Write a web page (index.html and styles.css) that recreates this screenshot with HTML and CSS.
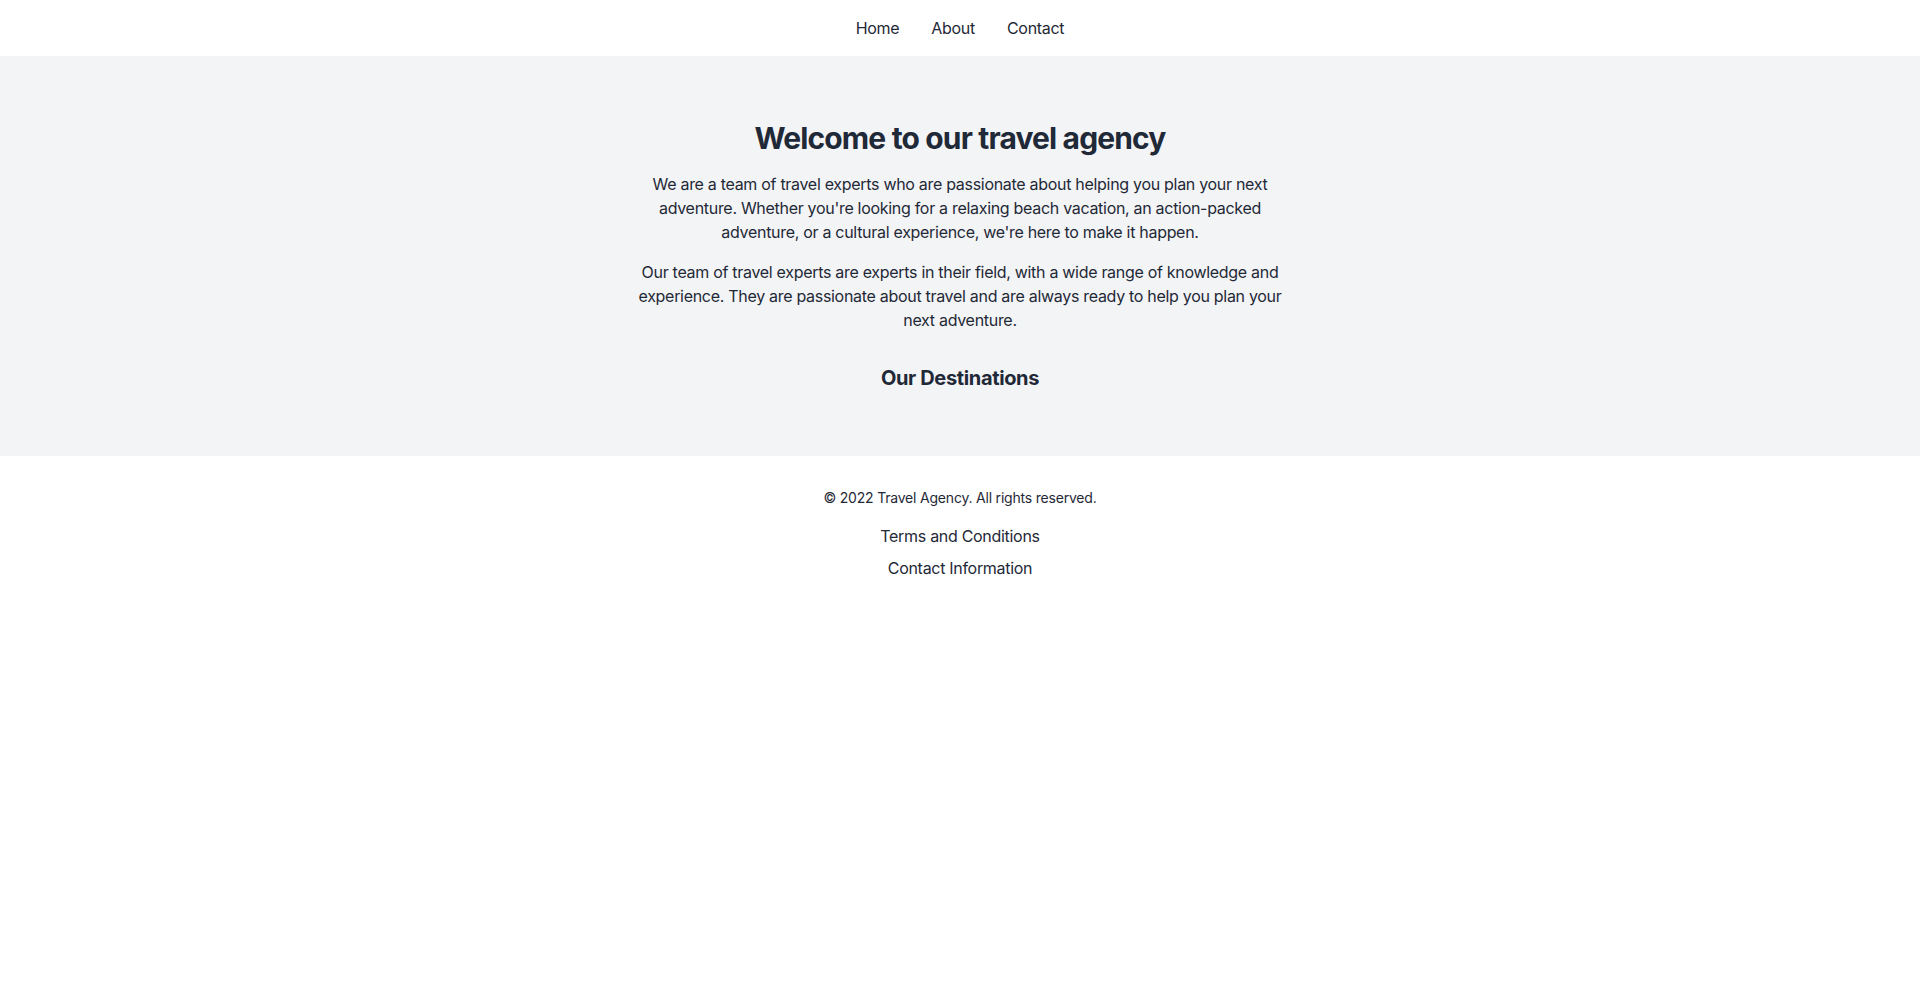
FILE: index.html
```html
<!DOCTYPE html>
<html lang="en">
<head>
<meta charset="utf-8">
<title>Travel Agency</title>
<link rel="stylesheet" href="styles.css">
</head>
<body>
<header class="site-header">
  <nav class="nav">
    <a class="nav-link" href="#">Home</a>
    <a class="nav-link" href="#">About</a>
    <a class="nav-link" href="#">Contact</a>
  </nav>
</header>
<main class="hero">
  <div class="hero-inner">
    <h1 class="hero-title">Welcome to our travel agency</h1>
    <p class="hero-text">We are a team of travel experts who are passionate about helping you plan your next adventure. Whether you're looking for a relaxing beach vacation, an action-packed adventure, or a cultural experience, we're here to make it happen.</p>
    <p class="hero-text">Our team of travel experts are experts in their field, with a wide range of knowledge and experience. They are passionate about travel and are always ready to help you plan your next adventure.</p>
    <h2 class="section-title">Our Destinations</h2>
  </div>
</main>
<footer class="footer">
  <p class="copyright">© 2022 Travel Agency. All rights reserved.</p>
  <ul class="footer-links">
    <li><a class="footer-link" href="#">Terms and Conditions</a></li>
    <li><a class="footer-link" href="#">Contact Information</a></li>
  </ul>
</footer>
</body>
</html>
```
FILE: styles.css
```css
* { box-sizing: border-box; }
html, body {
  margin: 0;
  padding: 0;
  background: #ffffff;
  font-family: Inter, "Noto Sans", sans-serif;
  color: #1f2937;
  font-size: 16px;
  line-height: 24px;
  letter-spacing: -0.3px;
}
a { color: inherit; text-decoration: none; }

.site-header { background: #ffffff; }
.nav {
  display: flex;
  justify-content: center;
  padding: 16px 0;
}
.nav-link {
  padding: 0 16px;
  font-size: 16px;
  line-height: 24px;
  color: #1f2937;
}

.hero {
  background: #f3f4f6;
  padding: 64px 0;
}
.hero-inner {
  max-width: 672px;
  margin: 0 auto;
  text-align: center;
}
.hero-title {
  margin: 0 0 16px;
  font-size: 30px;
  line-height: 36px;
  font-weight: 700;
  letter-spacing: -0.85px;
  color: #1f2937;
}
.hero-text {
  margin: 0 0 16px;
  font-size: 16px;
  line-height: 24px;
}
.section-title {
  margin: 32px 0 0;
  font-size: 20px;
  line-height: 28px;
  font-weight: 700;
  letter-spacing: -0.35px;
}

.footer {
  padding: 32px 0;
  text-align: center;
}
.copyright {
  margin: 0 0 16px;
  font-size: 14px;
  line-height: 20px;
  letter-spacing: -0.2px;
}
.footer-links {
  list-style: none;
  margin: 0;
  padding: 0;
  display: flex;
  flex-direction: column;
  align-items: center;
  gap: 8px;
}
.footer-link {
  font-size: 16px;
  line-height: 24px;
}
```
